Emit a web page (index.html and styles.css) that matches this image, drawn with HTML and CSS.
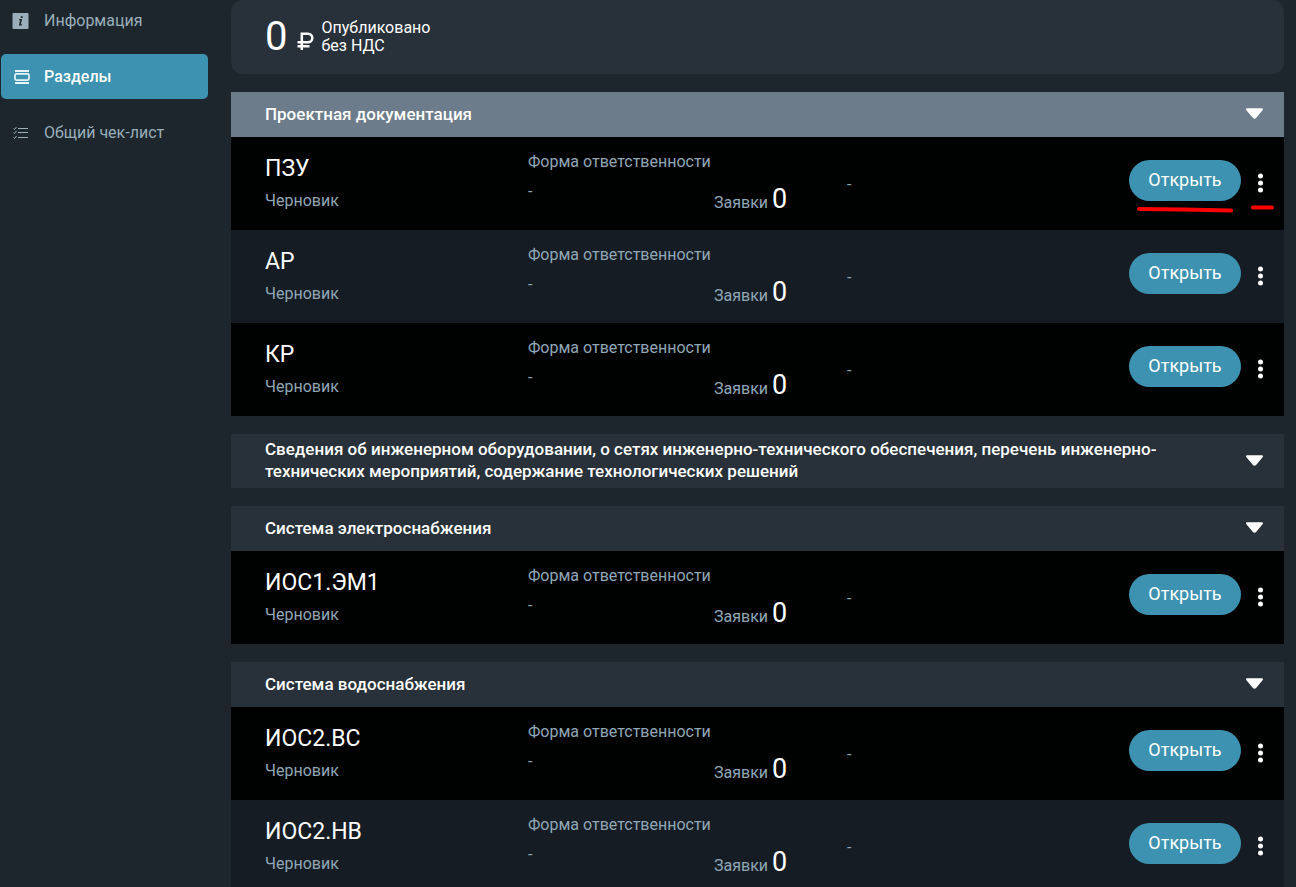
FILE: index.html
```html
<!DOCTYPE html>
<html lang="ru">
<head>
<meta charset="utf-8">
<title>Разделы</title>
<link rel="stylesheet" href="styles.css">
</head>
<body>
<svg class="sprite" aria-hidden="true">
  <symbol id="caret" viewBox="0 0 16 10"><path d="M1.3 0h13.4c1.3 0 1.6 1.2.9 2L9.5 9.200c-.8.9-2.200.9-3 0L.4 2C-.3 1.200 0 0 1.300 0z" fill="#fff"/></symbol>
  <symbol id="dots" viewBox="0 0 6 20"><circle cx="3" cy="3" r="2.500" fill="#fff"/><circle cx="3" cy="10" r="2.500" fill="#fff"/><circle cx="3" cy="17" r="2.500" fill="#fff"/></symbol>
</svg>
<div class="layout">
  <nav class="sidebar">
    <a class="nav-link" href="#info">
      <svg class="nav-icon" viewBox="0 0 18 18"><rect x="0.500" y="1" width="16" height="16" rx="1" fill="#9bafba"/><path d="M9 4.200h1.800l-.4 1.800h-1.800zM7.300 7h2.800l-1.200 5.300h1.100l-.3 1.300H6.900l1.200-5.300H7z" fill="#1c262c"/></svg>
      Информация
    </a>
    <a class="nav-link active" href="#sections" aria-current="page">
      <svg class="nav-icon" viewBox="0 0 18 18" fill="none" stroke="#e8f4f8" stroke-width="2"><path d="M3 3h14M3 15h14"/><rect x="3" y="5.900" width="14" height="6.200" rx="1.500" stroke-width="1.700"/></svg>
      Разделы
    </a>
    <a class="nav-link" href="#checklist">
      <svg class="nav-icon" viewBox="0 0 18 18" fill="none" stroke="#9bafba"><path d="M6 4.500h10M6 8.500h10M6 13.500h10"/><path d="M1.500 4.500l1 1 2-2.500M1.500 8.500l1 1 2-2.500M1.500 13.500l1 1 2-2.500"/></svg>
      Общий чек-лист
    </a>
  </nav>
  <main class="content">
    <section class="summary">
      <span class="sum">0</span>
      <svg class="ruble" viewBox="0 0 17 18" fill="none" stroke="#fff" stroke-width="2.500" role="img" aria-label="₽"><path d="M4.800 18V1.700H11a4.200 4.200 0 0 1 0 8.600H0.500M0.500 14.200h12"/></svg>
      <span class="sum-label">Опубликовано<br>без НДС</span>
    </section>

    <section class="group">
      <header class="group-head current"><h2>Проектная документация</h2><button class="toggle" aria-label="Свернуть"><svg><use href="#caret"/></svg></button></header>
      <article class="row">
        <div class="name"><h3>ПЗУ</h3><p>Черновик</p></div>
        <div class="form"><p>Форма ответственности</p><p>-</p></div>
        <div class="bids"><span>Заявки</span> <b>0</b></div>
        <div class="note">-</div>
        <div class="actions"><button class="open">Открыть</button><button class="more" aria-label="Меню"><svg><use href="#dots"/></svg></button>
          <svg class="marks" viewBox="0 0 140 8" fill="none" stroke="#f00" stroke-width="4" stroke-linecap="round"><path d="M4 4l44 .5 48 1M118 2.500h19"/></svg>
        </div>
      </article>
      <article class="row">
        <div class="name"><h3>АР</h3><p>Черновик</p></div>
        <div class="form"><p>Форма ответственности</p><p>-</p></div>
        <div class="bids"><span>Заявки</span> <b>0</b></div>
        <div class="note">-</div>
        <div class="actions"><button class="open">Открыть</button><button class="more" aria-label="Меню"><svg><use href="#dots"/></svg></button></div>
      </article>
      <article class="row">
        <div class="name"><h3>КР</h3><p>Черновик</p></div>
        <div class="form"><p>Форма ответственности</p><p>-</p></div>
        <div class="bids"><span>Заявки</span> <b>0</b></div>
        <div class="note">-</div>
        <div class="actions"><button class="open">Открыть</button><button class="more" aria-label="Меню"><svg><use href="#dots"/></svg></button></div>
      </article>
    </section>

    <section class="group">
      <header class="group-head"><h2>Сведения об инженерном оборудовании, о сетях инженерно-технического обеспечения, перечень инженерно-технических мероприятий, содержание технологических решений</h2><button class="toggle" aria-label="Свернуть"><svg><use href="#caret"/></svg></button></header>
    </section>

    <section class="group">
      <header class="group-head"><h2>Система электроснабжения</h2><button class="toggle" aria-label="Свернуть"><svg><use href="#caret"/></svg></button></header>
      <article class="row">
        <div class="name"><h3>ИОС1.ЭМ1</h3><p>Черновик</p></div>
        <div class="form"><p>Форма ответственности</p><p>-</p></div>
        <div class="bids"><span>Заявки</span> <b>0</b></div>
        <div class="note">-</div>
        <div class="actions"><button class="open">Открыть</button><button class="more" aria-label="Меню"><svg><use href="#dots"/></svg></button></div>
      </article>
    </section>

    <section class="group">
      <header class="group-head"><h2>Система водоснабжения</h2><button class="toggle" aria-label="Свернуть"><svg><use href="#caret"/></svg></button></header>
      <article class="row">
        <div class="name"><h3>ИОС2.ВС</h3><p>Черновик</p></div>
        <div class="form"><p>Форма ответственности</p><p>-</p></div>
        <div class="bids"><span>Заявки</span> <b>0</b></div>
        <div class="note">-</div>
        <div class="actions"><button class="open">Открыть</button><button class="more" aria-label="Меню"><svg><use href="#dots"/></svg></button></div>
      </article>
      <article class="row">
        <div class="name"><h3>ИОС2.НВ</h3><p>Черновик</p></div>
        <div class="form"><p>Форма ответственности</p><p>-</p></div>
        <div class="bids"><span>Заявки</span> <b>0</b></div>
        <div class="note">-</div>
        <div class="actions"><button class="open">Открыть</button><button class="more" aria-label="Меню"><svg><use href="#dots"/></svg></button></div>
      </article>
    </section>
  </main>
</div>
</body>
</html>
```

FILE: styles.css
```css
* { box-sizing: border-box; }
body {
  margin: 0;
  background: #1c262c;
  color: #fff;
  font: 16px/20px Roboto, sans-serif;
}
h2, h3, p { margin: 0; font-weight: 400; }
button {
  border: 0;
  padding: 0;
  background: none;
  color: inherit;
  font: inherit;
  cursor: pointer;
}
.sprite { position: absolute; width: 0; height: 0; }
.layout { display: flex; }

.sidebar {
  display: flex;
  flex-direction: column;
  gap: 11px;
  flex: 0 0 208px;
  padding-left: 1px;
}
.nav-link {
  display: flex;
  align-items: center;
  gap: 14px;
  height: 45px;
  padding-left: 11px;
  border-radius: 5px;
  color: #9bafba;
  text-decoration: none;
}
.nav-link:first-child { height: 43px; padding-bottom: 2px; }
.nav-link.active { background: #3c92b0; color: #fff; font-weight: 500; }
.nav-icon { width: 18px; height: 18px; }

.content {
  flex: 1;
  min-width: 0;
  display: flex;
  flex-direction: column;
  gap: 18px;
  padding: 0 12px 0 23px;
}
.summary {
  display: flex;
  align-items: center;
  height: 74px;
  padding-left: 34px;
  border-radius: 12px;
  background: #28313a;
}
.sum { font-size: 40px; line-height: 46px; }
.ruble { width: 17px; height: 18px; margin: 7px 7px 0 10px; }
.sum-label { line-height: 18px; }

.group-head {
  display: flex;
  align-items: center;
  justify-content: space-between;
  min-height: 45px;
  padding: 4px 13px 6px 34px;
  background: #28313a;
}
.group-head.current { background: #6c7c8a; }
.group-head h2 { max-width: 920px; font-size: 17px; line-height: 22px; font-weight: 500; }
.toggle { display: flex; padding: 8px; }
.toggle svg { width: 17px; height: 11px; }

.row {
  display: grid;
  grid-template-columns: 263fr 186fr 133fr 282fr auto;
  height: 93px;
  padding: 0 17px 0 34px;
  background: #000201;
  color: #90a7b5;
}
.row:nth-of-type(even) { background: #161c24; }
.name { padding-top: 18px; }
.name h3 { margin-bottom: 8px; color: #fff; font-size: 23px; line-height: 28px; }
.form { padding-top: 15px; }
.form p + p { margin-top: 10px; }
.bids { padding-top: 45px; line-height: 34px; white-space: nowrap; }
.bids b { color: #fff; font-size: 27px; font-weight: 400; }
.note { padding-top: 38px; }
.actions {
  position: relative;
  align-self: start;
  display: flex;
  align-items: center;
  gap: 13px;
  padding-top: 23px;
  color: #fff;
}
.open {
  height: 41px;
  width: 112px;
  padding-bottom: 2px;
  border-radius: 21px;
  background: #3c92b0;
  font-size: 18px;
}
.more { display: flex; padding-top: 5px; }
.more svg { width: 13px; height: 20px; }
.marks { position: absolute; left: 6px; top: 68px; width: 140px; height: 8px; overflow: visible; }
```
